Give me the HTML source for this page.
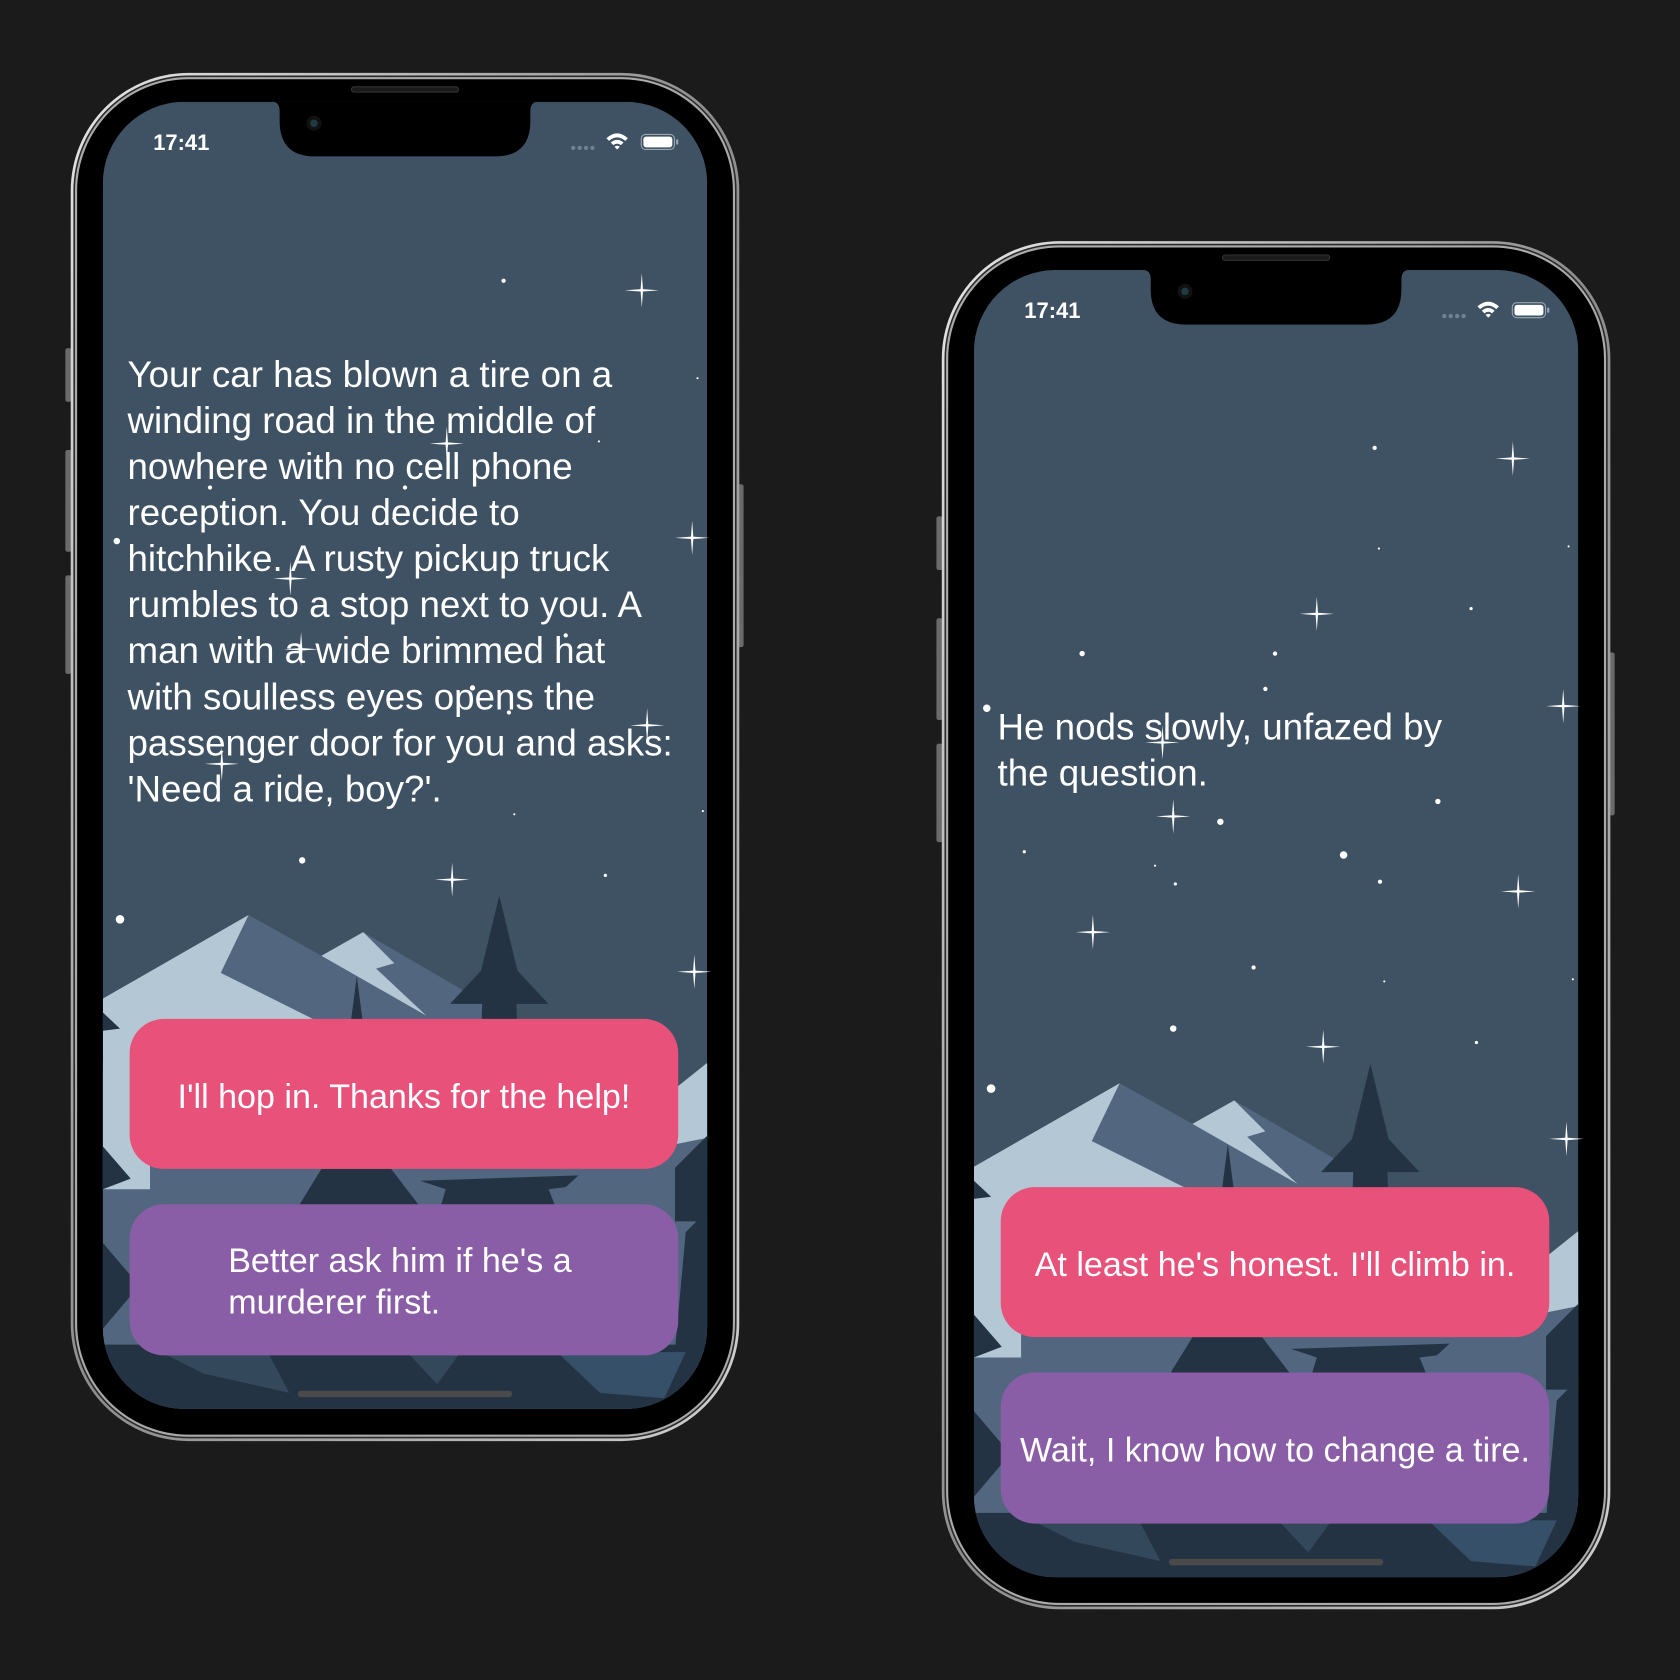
<!DOCTYPE html>
<html><head><meta charset="utf-8"><style>
html,body{margin:0;padding:0;background:#1b1b1b;}
svg{display:block;}
text{font-family:"Liberation Sans",sans-serif;fill:#fff;}
</style></head><body>
<svg width="1680" height="1680" viewBox="0 0 1568 1568" xmlns="http://www.w3.org/2000/svg">
<defs>
  <linearGradient id="ring" x1="0" y1="0" x2="1" y2="1">
    <stop offset="0" stop-color="#e6e6e6"/><stop offset="0.5" stop-color="#8c8c8c"/><stop offset="1" stop-color="#d0d0d0"/>
  </linearGradient>
  <clipPath id="scr"><rect x="96" y="95" width="564" height="1220" rx="76"/></clipPath>
  <path id="sp" d="M0,-16 L1.1,-1.1 L16,0 L1.1,1.1 L0,16 L-1.1,1.1 L-16,0 L-1.1,-1.1Z" fill="#fff"/>
  <g id="phone">
    <rect x="61" y="325" width="6" height="50" rx="2" fill="#6a6a6a"/>
    <rect x="61" y="420" width="6" height="95" rx="2" fill="#6a6a6a"/>
    <rect x="61" y="537" width="6" height="92" rx="2" fill="#6a6a6a"/>
    <rect x="688" y="452" width="6" height="152" rx="2" fill="#6a6a6a"/>
    <rect x="66" y="68" width="624" height="1277" rx="110" fill="url(#ring)"/>
    <rect x="68.5" y="70.5" width="619" height="1272" rx="107.5" fill="#2a2a2a"/>
    <rect x="70" y="72" width="616" height="1269" rx="106" fill="#aaa"/>
    <rect x="72" y="74" width="612" height="1265" rx="104" fill="#000"/>
    <g clip-path="url(#scr)">
      <rect x="96" y="95" width="564" height="1220" fill="#3f5263"/>
      <polygon points="40,1060 232,854 300,892 339,870 700,1080 700,1320 40,1320" fill="#52677f"/>
      <polygon points="96,932 232,854 206,908 330,970 96,1070" fill="#b4c7d4"/>
      <polygon points="300,892 339,870 368,899 351,904 398,948" fill="#b4c7d4"/>
      <polygon points="600,1040 660,992 670,1060 620,1070" fill="#b4c7d4"/>
      <polygon points="96,990 140,1010 140,1110 96,1110" fill="#b4c7d4"/>
      <polygon points="466,836 483,906 512,937 482,937 484,1000 448,1000 450,937 420,937 449,906" fill="#233343"/>
      <polygon points="333,911 342,980 324,980" fill="#233343"/>
      <polygon points="96,945 112,960 96,962" fill="#233343"/>
      <polygon points="96,1070 122,1100 96,1110" fill="#233343"/>
      <polygon points="660,1060 630,1090 630,1140 660,1140" fill="#233343"/>
      <polygon points="276,1130 300,1091 365,1091 395,1130" fill="#233343"/>
      <polygon points="392,1102 540,1097 528,1108 512,1110 520,1130 410,1130 416,1110" fill="#233343"/>
      <polygon points="96,1160 130,1200 96,1240" fill="#233343"/>
      <polygon points="640,1150 660,1130 660,1260 630,1260" fill="#233343"/>
      <polygon points="96,1255 660,1255 660,1320 96,1320" fill="#233343"/>
      <polygon points="150,1262 250,1262 270,1300 190,1282" fill="#34485c"/>
      <polygon points="380,1262 430,1262 408,1292" fill="#34485c"/>
      <polygon points="520,1262 640,1262 620,1305 560,1300" fill="#37506a"/>
      <rect x="278" y="1298" width="200" height="6" rx="3" fill="#4a4a4a"/>
    </g>
    <path d="M254,95 Q261,95 261,104 L261,113 Q261,146 294,146 L462,146 Q495,146 495,113 L495,104 Q495,95 502,95 Z" fill="#000"/>
    <rect x="328" y="81" width="100" height="5" rx="2.5" fill="#1a1a1a" stroke="#333" stroke-width="1"/>
    <circle cx="293" cy="115" r="7" fill="#111"/><circle cx="293" cy="115" r="3.5" fill="#1f3a44"/>
    <text x="143" y="140" font-size="20.5" font-weight="bold">17:41</text>
    <g fill="#6f8193"><circle cx="535" cy="138" r="2"/><circle cx="541" cy="138" r="2"/><circle cx="547" cy="138" r="2"/><circle cx="553" cy="138" r="2"/></g>
    <path d="M566,129 Q576,120 586,129 L583.5,131.5 Q576,125 568.5,131.5Z M570,133 Q576,128 582,133 L579.5,135.5 Q576,132.5 572.5,135.5Z M573.5,137 Q576,135 578.5,137 L576,139.5Z" fill="#fff"/>
    <rect x="598.5" y="125.5" width="31" height="14" rx="4" fill="none" stroke="#9aa7b3" stroke-width="1"/>
    <rect x="600.5" y="127.5" width="27" height="10" rx="2.5" fill="#fff"/>
    <rect x="631" y="130" width="2" height="5" rx="1" fill="#9aa7b3"/>
  </g>
</defs>

<rect width="1568" height="1568" fill="#1b1b1b"/>

<use href="#phone"/>
<g>
  <use href="#sp" x="599" y="271"/><use href="#sp" x="417" y="414"/>
  <use href="#sp" x="646" y="502"/><use href="#sp" x="271" y="540"/><use href="#sp" x="281" y="606"/>
  <use href="#sp" x="604" y="677"/><use href="#sp" x="207" y="713"/><use href="#sp" x="422" y="821"/>
  <use href="#sp" x="648" y="907"/>
  <g fill="#fff">
    <circle cx="470" cy="262" r="2"/><circle cx="651" cy="353" r="1"/><circle cx="559" cy="412" r="1"/>
    <circle cx="196" cy="455" r="2"/><circle cx="378" cy="455" r="2"/><circle cx="109" cy="505" r="3"/>
    <circle cx="367" cy="484" r="1"/><circle cx="528" cy="593" r="2"/><circle cx="441" cy="642" r="2.5"/>
    <circle cx="475" cy="665" r="2"/><circle cx="480" cy="760" r="1"/><circle cx="656" cy="757" r="1"/>
    <circle cx="282" cy="803" r="3"/><circle cx="565" cy="817" r="1.5"/><circle cx="112" cy="858" r="4"/>
  </g>
  <g font-size="34.3">
    <text x="119" y="361">Your car has blown a tire on a</text>
    <text x="119" y="404">winding road in the middle of</text>
    <text x="119" y="447">nowhere with no cell phone</text>
    <text x="119" y="490">reception. You decide to</text>
    <text x="119" y="533">hitchhike. A rusty pickup truck</text>
    <text x="119" y="576">rumbles to a stop next to you. A</text>
    <text x="119" y="619">man with a wide brimmed hat</text>
    <text x="119" y="662">with soulless eyes opens the</text>
    <text x="119" y="705">passenger door for you and asks:</text>
    <text x="119" y="748">'Need a ride, boy?'.</text>
  </g>
  <rect x="121" y="951" width="512" height="140" rx="32" fill="#e7517a"/>
  <rect x="121" y="1124" width="512" height="141" rx="32" fill="#8a5ea6"/>
  <g font-size="31.8">
    <text x="377" y="1034" text-anchor="middle">I'll hop in. Thanks for the help!</text>
    <text x="213" y="1187">Better ask him if he's a</text>
    <text x="213" y="1226">murderer first.</text>
  </g>
</g>

<use href="#phone" transform="translate(813,157)"/>
<g>
  <use href="#sp" x="1412" y="428"/><use href="#sp" x="1229" y="573"/><use href="#sp" x="1459" y="659"/>
  <use href="#sp" x="1085" y="693"/><use href="#sp" x="1095" y="762"/><use href="#sp" x="1417" y="832"/>
  <use href="#sp" x="1020" y="870"/><use href="#sp" x="1235" y="977"/><use href="#sp" x="1462" y="1063"/>
  <g fill="#fff">
    <circle cx="1283" cy="418" r="2"/><circle cx="1287" cy="512" r="1"/><circle cx="1464" cy="510" r="1"/>
    <circle cx="1373" cy="568" r="1.5"/><circle cx="1010" cy="610" r="2.5"/><circle cx="1190" cy="610" r="2"/>
    <circle cx="1181" cy="643" r="2"/><circle cx="921" cy="661" r="3.5"/><circle cx="1342" cy="748" r="2.5"/>
    <circle cx="1139" cy="767" r="3"/><circle cx="956" cy="795" r="1.5"/><circle cx="1254" cy="798" r="3.5"/>
    <circle cx="1078" cy="808" r="1"/><circle cx="1097" cy="825" r="1.5"/><circle cx="1288" cy="823" r="2"/>
    <circle cx="1170" cy="903" r="2"/><circle cx="1292" cy="916" r="1"/><circle cx="1468" cy="914" r="1"/>
    <circle cx="1095" cy="960" r="3"/><circle cx="1378" cy="973" r="1.5"/><circle cx="925" cy="1016" r="4"/>
  </g>
  <g font-size="34.3">
    <text x="931" y="690">He nods slowly, unfazed by</text>
    <text x="931" y="733">the question.</text>
  </g>
  <rect x="934" y="1108" width="512" height="140" rx="32" fill="#e7517a"/>
  <rect x="934" y="1281" width="512" height="141" rx="32" fill="#8a5ea6"/>
  <g font-size="31.8">
    <text x="1190" y="1191" text-anchor="middle">At least he's honest. I'll climb in.</text>
    <text x="1190" y="1364" text-anchor="middle">Wait, I know how to change a tire.</text>
  </g>
</g>
</svg>
</body></html>
